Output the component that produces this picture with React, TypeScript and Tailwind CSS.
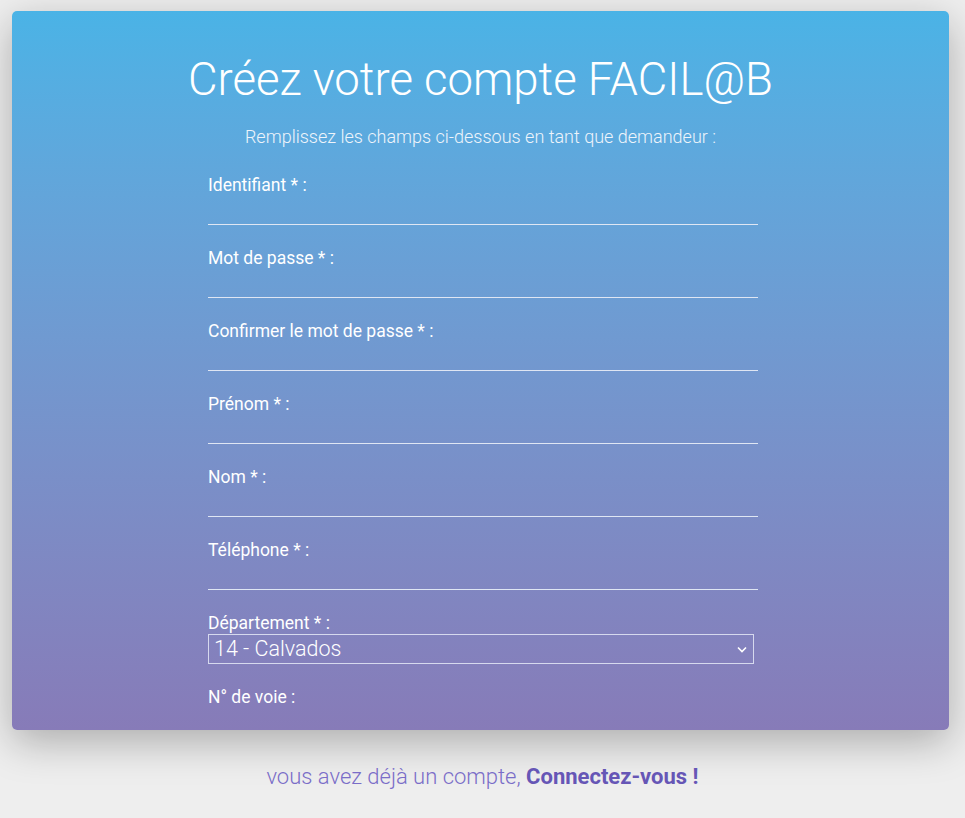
import React from "react";

const fields = [
  "Identifiant * :",
  "Mot de passe * :",
  "Confirmer le mot de passe * :",
  "Prénom * :",
  "Nom * :",
  "Téléphone * :",
];

function Field({ label }: { label: string }) {
  return (
    <div className="mb-[21px] flex flex-col">
      <label className="h-[24px] text-[17.5px] leading-[24px] text-white">{label}</label>
      <input
        className="h-[28px] w-full border-0 border-b border-solid border-[#dfe6f3] bg-transparent text-white outline-none"
        type="text"
      />
    </div>
  );
}

export default function App() {
  return (
    <div
      className="min-h-[818px] w-full bg-[#eeeeee] pt-[11px]"
      style={{ fontFamily: "Roboto, 'Liberation Sans', sans-serif" }}
    >
      <div className="ml-[12px] h-[719px] w-[937px] overflow-hidden rounded-[5px] bg-gradient-to-b from-[#4ab3e6] to-[#877bb8] pt-[41px] shadow-[0_12px_40px_rgba(0,0,0,0.28)]">
        <h1 className="text-center text-[45.5px] font-light leading-[56px] text-white">
          Créez votre compte FACIL@B
        </h1>
        <p className="mt-[15px] text-center text-[18px] font-light leading-[28px] text-[#eef4fb]">
          Remplissez les champs ci-dessous en tant que demandeur :
        </p>
        <form className="ml-[196px] mt-[22px] w-[550px]">
          {fields.map((f) => (
            <Field key={f} label={f} />
          ))}
          <div className="mb-[21px] flex flex-col">
            <label className="h-[23px] text-[17.5px] leading-[24px] text-white">Département * :</label>
            <div className="relative h-[30px] w-[546px] border border-solid border-[#d6d9ee]">
              <select className="h-full w-full appearance-none bg-transparent pl-[5px] text-[21.5px] font-light leading-[28px] text-white outline-none">
                <option>14 - Calvados</option>
              </select>
              <svg
                className="pointer-events-none absolute right-[6px] top-[11px]"
                width="10"
                height="7"
                viewBox="0 0 10 7"
              >
                <path d="M1 1.5 L5 5.5 L9 1.5" fill="none" stroke="white" strokeWidth="1.6" />
              </svg>
            </div>
          </div>
          <Field label="N° de voie :" />
        </form>
      </div>
      <p className="mt-[33px] text-center text-[22px] leading-[28px] text-[#7a6dc8]">
        <span className="font-light">vous avez déjà un compte, </span>
        <a className="font-bold text-[#6656b6]" href="#">
          Connectez-vous !
        </a>
      </p>
    </div>
  );
}
